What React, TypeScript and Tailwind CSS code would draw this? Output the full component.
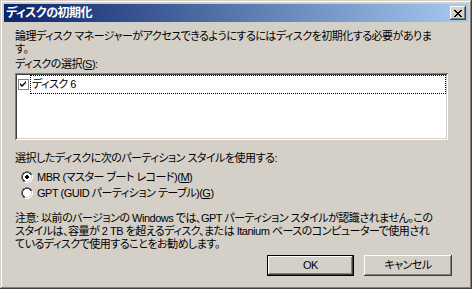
import React from "react";

const FONT = "[font-family:'Liberation_Sans','Noto_Sans_CJK_JP',sans-serif]";

function Radio({ checked }: { checked: boolean }) {
  return (
    <svg width="12" height="12" viewBox="0 0 12 12" className="shrink-0">
      <path d="M4 0h4v1h2v1h1v2h1v4h-1v2h-1v1H8v1H4v-1H2v-1H1V8H0V4h1V2h1V1h2z" fill="#808080" />
      <path d="M4 1h4v1h2v2h1v4h-1v2H8v1H4v-1H2V8H1V4h1V2h2z" fill="#404040" />
      <path d="M11 4h1v4h-1v2h-1v1H8v1H4v-1h4v-1h2V8h1z" fill="#ffffff" />
      <path d="M10 4h1v4h-1v2H8v1H4v-1h4V8h2z" fill="#d4d0c8" />
      <path d="M4 2h4v1h1v1h1v4H9v1H8v1H4V9H3V8H2V4h1V3h1z" fill="#ffffff" />
      {checked && <path d="M5 4h2v1h1v2H7v1H5V7H4V5h1z" fill="#000" />}
    </svg>
  );
}

export default function App() {
  return (
    <div
      className={`w-[472px] h-[289px] bg-[#d4d0c8] p-[4px] flex flex-col text-[11px] leading-[13px] tracking-[-0.5px] text-black ${FONT} shadow-[inset_-1px_-1px_#404040,inset_1px_1px_#d4d0c8,inset_-2px_-2px_#808080,inset_2px_2px_#ffffff] overflow-hidden`}
    >
      {/* Title bar */}
      <div className="h-[18px] shrink-0 flex items-center justify-between pl-[2px] pr-[2px] bg-[linear-gradient(to_right,#0a246a,#a6caf0)]">
        <span className="text-white font-bold text-[12px] leading-[18px] [font-feature-settings:'palt']">
          ディスクの初期化
        </span>
        <div className="w-[16px] h-[14px] bg-[#d4d0c8] flex items-center justify-center shadow-[inset_-1px_-1px_#404040,inset_1px_1px_#ffffff,inset_-2px_-2px_#808080]">
          <svg width="8" height="7" viewBox="0 0 8 7">
            <path
              d="M0 0h2v1h1v1h2V1h1V0h2v1H7v1H6v1H5v1h1v1h1v1h1v1H6V6H5V5H3v1H2v1H0V6h1V5h1V4h1V3H2V2H1V1H0z"
              fill="#000"
            />
          </svg>
        </div>
      </div>

      {/* Body */}
      <div className="flex flex-col pl-[11px] pr-[16px] [font-feature-settings:'palt']">
        <div className="mt-[8px] whitespace-nowrap">
          <div>論理ディスク マネージャーがアクセスできるようにするにはディスクを初期化する必要がありま</div>
          <div>す。</div>
        </div>
        <div className="mt-[2px] whitespace-nowrap">
          ディスクの選択(<span className="underline">S</span>):
        </div>
        <div className="mt-[2px] w-[433px] h-[67px] bg-white shadow-[inset_1px_1px_#808080,inset_-1px_-1px_#ffffff,inset_2px_2px_#404040,inset_-2px_-2px_#d4d0c8] p-[2px]">
          <div className="flex items-center h-[19px]">
            <div className="ml-[1px] w-[11px] h-[11px] border border-[#808080] bg-white flex items-center justify-center shrink-0">
              <svg width="7" height="7" viewBox="0 0 7 7">
                <path d="M6 0v2L3 5 2 6 0 4V2l2 2 4-4z" fill="#000" />
              </svg>
            </div>
            <div className="ml-[1px] flex-1 h-[19px] border border-dotted border-black flex items-center pl-[1px]">
              ディスク 6
            </div>
          </div>
        </div>
        <div className="mt-[12px] whitespace-nowrap">
          選択したディスクに次のパーティション スタイルを使用する:
        </div>
        <div className="mt-[4px] flex flex-col pl-[6px]">
          <div className="h-[16px] flex items-center gap-[4px] whitespace-nowrap">
            <Radio checked />
            <span>
              MBR (マスター ブート レコード)(<span className="underline">M</span>)
            </span>
          </div>
          <div className="h-[16px] flex items-center gap-[4px] whitespace-nowrap">
            <Radio checked={false} />
            <span>
              GPT (GUID パーティション テーブル)(<span className="underline">G</span>)
            </span>
          </div>
        </div>
        <div className="mt-[11px] whitespace-nowrap">
          <div>注意: 以前のバージョンの Windows では、GPT パーティション スタイルが認識されません。この</div>
          <div>スタイルは、容量が 2 TB を超えるディスク、または Itanium ベースのコンピューターで使用され</div>
          <div>ているディスクで使用することをお勧めします。</div>
        </div>
        <div className="mt-[4px] flex justify-end gap-[10px]">
          <button className="w-[87px] h-[21px] bg-[#d4d0c8] border border-black shadow-[inset_-1px_-1px_#404040,inset_1px_1px_#ffffff,inset_-2px_-2px_#808080] flex items-center justify-center">
            OK
          </button>
          <button className="w-[88px] h-[21px] bg-[#d4d0c8] shadow-[inset_-1px_-1px_#404040,inset_1px_1px_#ffffff,inset_-2px_-2px_#808080] flex items-center justify-center">
            キャンセル
          </button>
        </div>
      </div>
    </div>
  );
}
